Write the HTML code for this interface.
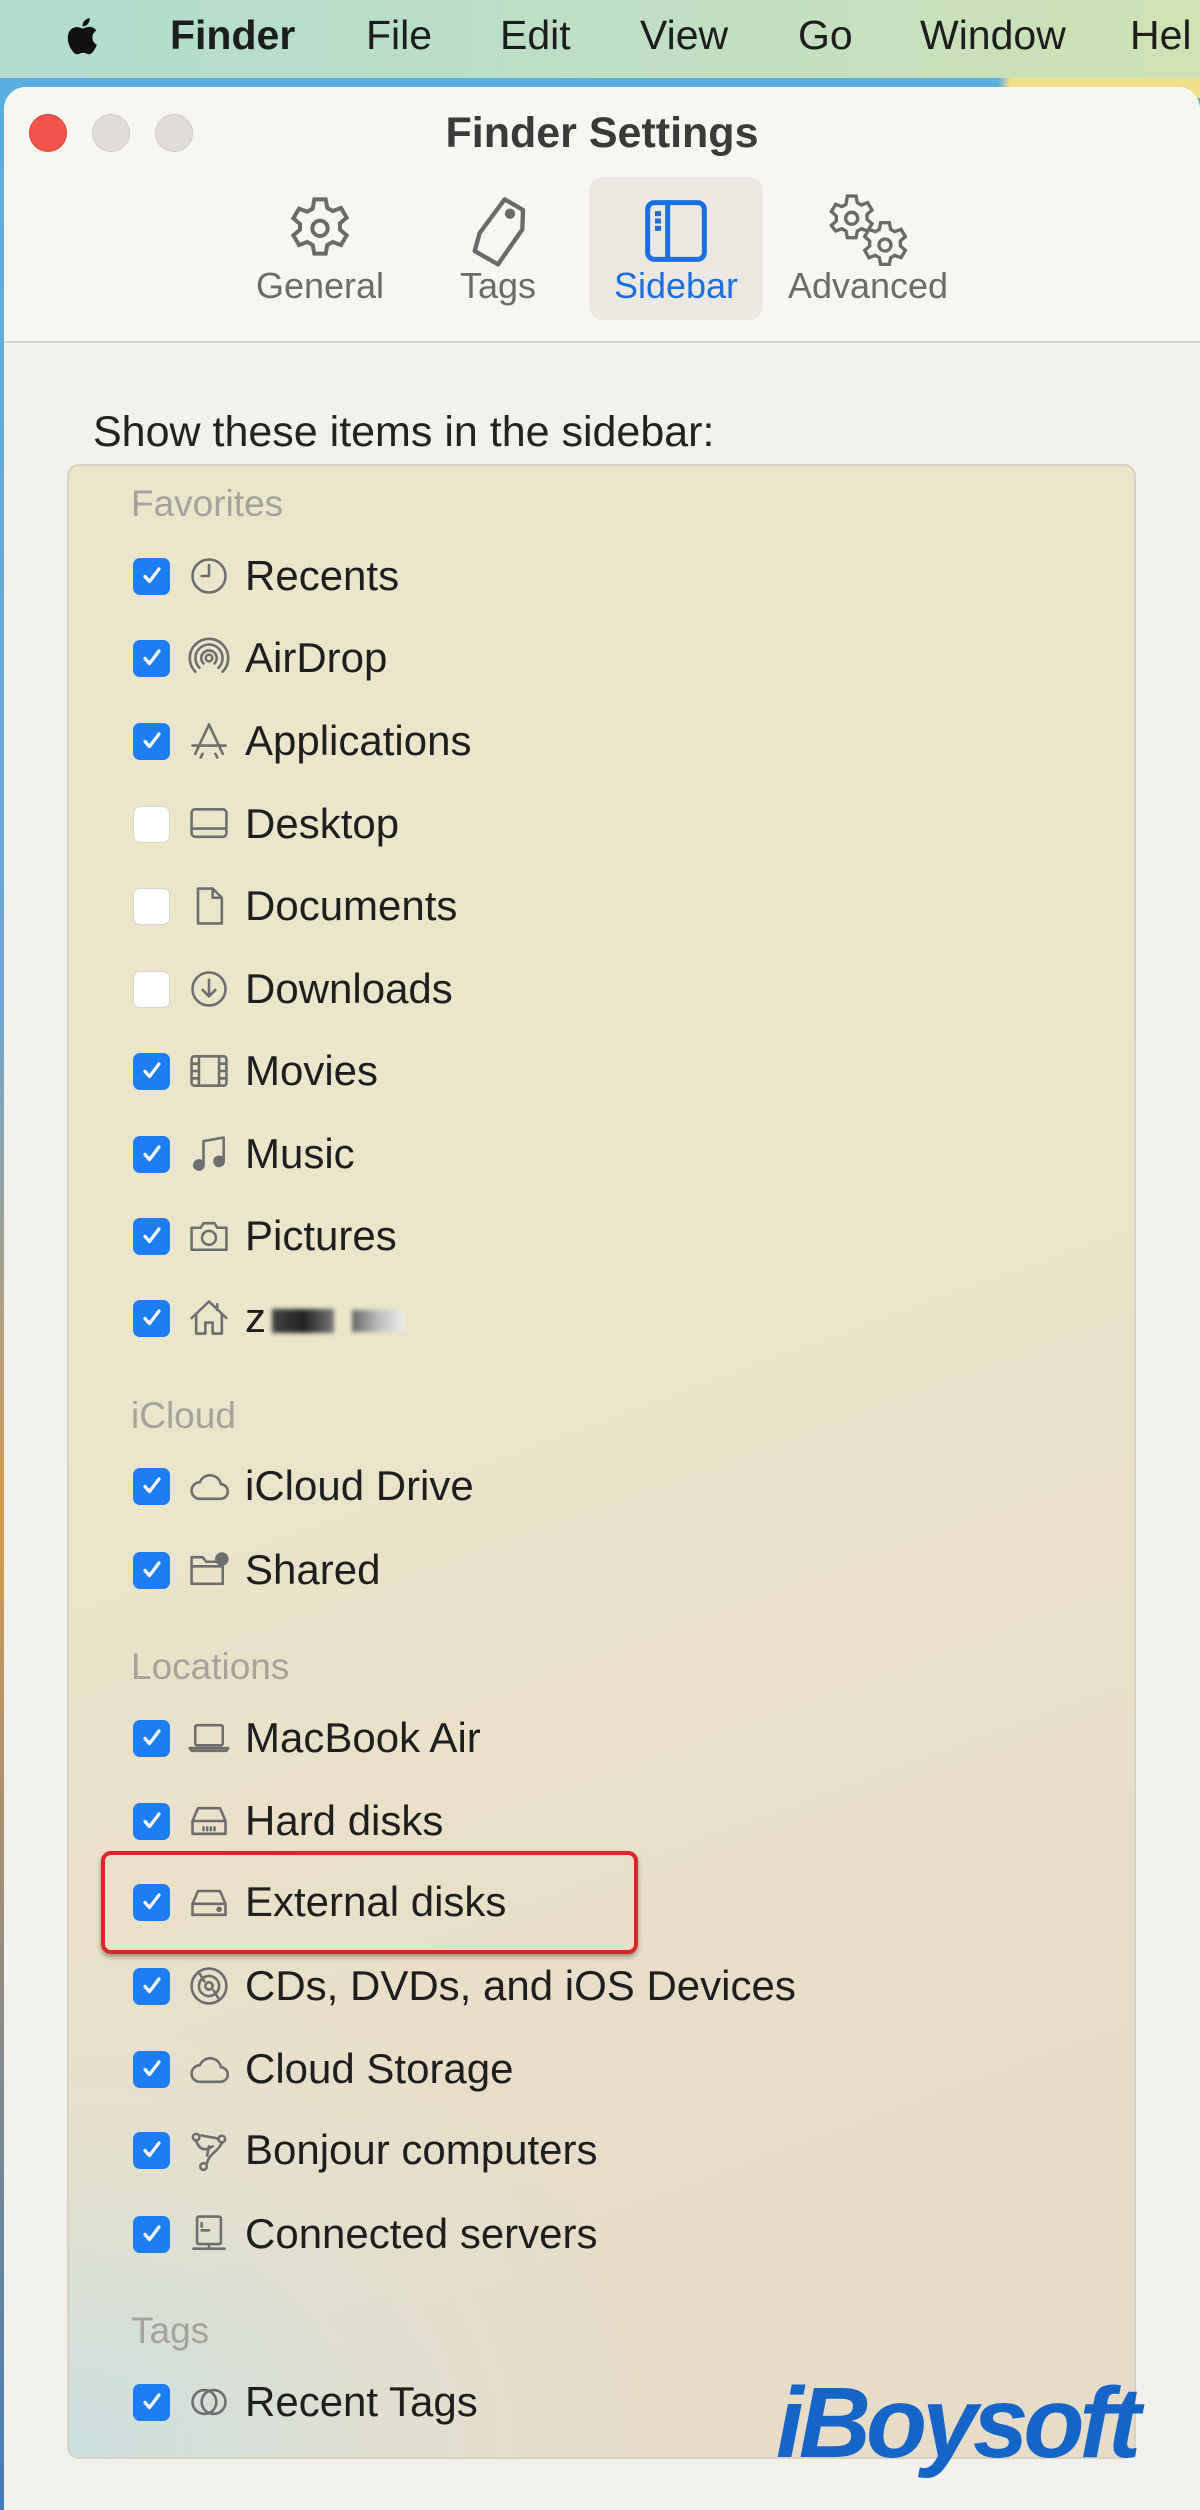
<!DOCTYPE html>
<html><head><meta charset="utf-8">
<style>
*{margin:0;padding:0;box-sizing:border-box}
html,body{width:1200px;height:2510px;overflow:hidden}
body{position:relative;font-family:"Liberation Sans",sans-serif;background:linear-gradient(180deg,#5aaee0 0,#6aa8d8 40%,#d99a4a 60%,#3f7ec0 100%)}
#menubar{position:absolute;left:0;top:0;width:1200px;height:78px;overflow:hidden;background:linear-gradient(90deg,#b0ddcf 0,#bfe0c4 55%,#cfe2b2 100%)}
#menubar span{position:absolute;top:12px;font-size:41px;color:#1d1d1d;white-space:nowrap}
#strip{position:absolute;left:0;top:78px;width:1200px;height:20px;background:linear-gradient(100deg,#5aaee0 0,#5aaee0 83%,#f1e08a 84%,#f1e08a 100%)}
#win{position:absolute;left:4px;top:87px;width:1196px;height:2423px;background:#f3f1ec;border-radius:22px 22px 0 0;overflow:hidden}
#head{position:absolute;left:0;top:0;width:100%;height:256px;background:#f8f6f1;border-bottom:2px solid #d8d5cf}
.tl{position:absolute;top:27px;width:38px;height:38px;border-radius:50%;background:#e0ddd8;border:1px solid #cfccc6}
#title{position:absolute;left:0;width:1196px;top:22px;text-align:center;font-size:43px;font-weight:bold;color:#3a3a3a}
.tb{position:absolute;top:90px;width:174px;height:143px;text-align:center}
.tb svg{position:absolute;left:50%;top:14px;transform:translateX(-50%)}
.tb .l{position:absolute;left:-20px;right:-20px;top:88px;font-size:36px;color:#6b6b6b}
#show{position:absolute;left:93px;top:408px;font-size:43px;color:#222}
#box{position:absolute;left:67px;top:464px;width:1069px;height:1995px;border:2px solid #d8d2c3;border-radius:12px;background:linear-gradient(160deg,#ebe6c9 0,#ebe6c9 35%,#e9dfc8 70%,#e6dcc8 85%),#e9e2c8;overflow:hidden}
#box:after{content:"";position:absolute;left:0;bottom:0;width:600px;height:500px;background:radial-gradient(ellipse at 0% 100%,rgba(200,225,228,.9) 0,rgba(220,226,215,.4) 40%,rgba(0,0,0,0) 70%)}
.hd{position:absolute;left:131px;font-size:37px;color:#a5a39a;z-index:2}
.row{position:absolute;left:133px;height:44px;display:flex;align-items:center;z-index:2}
.cb{width:37px;height:37px;border-radius:7px;background:#1d7df5;display:flex;align-items:center;justify-content:center;flex:none}
.cb.off{background:#fff;border:1px solid #d8d6d0}
.ic{width:44px;height:44px;margin-left:17px;display:flex;align-items:center;justify-content:center;flex:none}
.tx{margin-left:14px;font-size:42px;color:#1e1e1e;white-space:nowrap}
#hl{position:absolute;left:101px;top:1851px;width:537px;height:103px;border:4px solid #d9262a;border-radius:10px;box-shadow:0 3px 5px rgba(0,0,0,.35);z-index:3}
#logo{position:absolute;left:776px;top:2366px;font-size:100px;font-weight:bold;font-style:italic;color:#1565c8;letter-spacing:-5px;z-index:4;white-space:nowrap}
</style></head><body>
<div id="menubar">
<svg style="position:absolute;left:63px;top:14px" width="36" height="44" viewBox="0 0 24 29"><path d="M19.6 15.4c0-3 2.5-4.5 2.6-4.6-1.4-2.1-3.6-2.4-4.4-2.4-1.9-.2-3.7 1.1-4.6 1.1-1 0-2.4-1.1-4-1-2 0-3.9 1.2-5 3-2.1 3.7-.5 9.2 1.5 12.2 1 1.5 2.2 3.1 3.8 3 1.5-.1 2.1-1 3.9-1s2.3 1 3.9 1c1.6 0 2.7-1.5 3.6-3 1.2-1.7 1.6-3.3 1.700-3.4-.1 0-3-1.2-3-4.9zM16.6 6.4c.8-1 1.4-2.4 1.2-3.8-1.2.1-2.6.8-3.5 1.8-.8.9-1.4 2.3-1.2 3.7 1.3.1 2.7-.7 3.5-1.7z" fill="#111"/></svg>
<span style="left:170px;font-weight:bold">Finder</span>
<span style="left:366px">File</span>
<span style="left:500px">Edit</span>
<span style="left:640px">View</span>
<span style="left:798px">Go</span>
<span style="left:920px">Window</span>
<span style="left:1130px">Hel</span>
</div>
<div id="strip"></div>
<div id="win">
<div id="head">
<div class="tl" style="left:25px;background:#f3534b;border-color:#e0443c"></div>
<div class="tl" style="left:88px"></div>
<div class="tl" style="left:151px"></div>
<div id="title">Finder Settings</div>
<div class="tb" style="left:229px"><svg width="80" height="80" viewBox="0 0 24 24" fill="none" stroke="#6a6a6a" stroke-width="1.2"><path d="M10.3 2.5h3.4l.5 2.6 1.6.9 2.5-.9 1.7 2.9-2 1.7v1.9l2 1.7-1.7 2.9-2.5-.9-1.6.9-.5 2.6h-3.4l-.5-2.6-1.6-.9-2.5.9-1.7-2.9 2-1.7V9.9l-2-1.7 1.7-2.9 2.5.9 1.6-.9z"/><circle cx="12" cy="11.2" r="2.3"/></svg><div class="l">General</div></div>
<div class="tb" style="left:407px"><svg width="80" height="80" viewBox="0 0 24 24" fill="none" stroke="#6a6a6a" stroke-width="1.3" stroke-linejoin="round"><path d="M14 2.5l5.5 3.2-.2 5.8L12 22 5 18l1.5-5.4z"/><circle cx="15.6" cy="6.8" r=".9" fill="#6a6a6a"/></svg><div class="l">Tags</div></div>
<div class="tb" style="left:585px;background:#ebe8e2;border-radius:14px"><svg width="80" height="80" viewBox="0 0 24 24" fill="none" stroke="#1a6fe0" stroke-width="1.5"><rect x="3.5" y="3.5" width="17" height="17" rx="2"/><path d="M9.5 3.5v17M5.7 6.8h1.8M5.7 9h1.8M5.7 11.2h1.8"/></svg><div class="l" style="color:#1a6fe0">Sidebar</div></div>
<div class="tb" style="left:777px"><svg width="90" height="80" viewBox="0 0 26 24" fill="none" stroke="#6a6a6a" stroke-width="1"><path d="M6.8 1.5h2.6l.4 2 1.2.7 1.9-.7 1.3 2.2-1.5 1.3v1.5l1.5 1.3-1.3 2.2-1.9-.7-1.2.7-.4 2H6.8l-.4-2-1.2-.7-1.9.7L2 10.3l1.5-1.3V7.5L2 6.2l1.3-2.2 1.9.7 1.2-.7z"/><circle cx="8.1" cy="8.2" r="1.8"/><path d="M16.8 9.5h2.6l.4 2 1.2.7 1.9-.7 1.3 2.2-1.5 1.3v1.5l1.5 1.3-1.3 2.2-1.9-.7-1.2.7-.4 2h-2.6l-.4-2-1.2-.7-1.9.7-1.3-2.2 1.5-1.3V15l-1.5-1.3 1.3-2.2 1.9.7 1.2-.7z"/><circle cx="18.1" cy="16.2" r="1.8"/></svg><div class="l">Advanced</div></div>
</div>
</div>
<div id="show">Show these items in the sidebar:</div>
<div id="box"></div>

<div class="hd" style="top:483px">Favorites</div>
<div class="hd" style="top:1395px">iCloud</div>
<div class="hd" style="top:1646px">Locations</div>
<div class="hd" style="top:2310px">Tags</div>

<div id="hl"></div>
<div id="logo">iBoysoft</div>

<div id="rows"></div>
<script>
var ck='<svg width="24" height="24" viewBox="0 0 24 24"><path d="M5 12.5l4.5 5L19 5" fill="none" stroke="#fff" stroke-width="3.2" stroke-linecap="round" stroke-linejoin="round"/></svg>';
var S='fill="none" stroke="#6e6e6e" stroke-width="1.4" stroke-linecap="round" stroke-linejoin="round"';
var I={
rec:'<circle cx="12" cy="12" r="9"/><path d="M12 6v6H8"/>',
air:'<circle cx="12" cy="12" r="1.8"/><path d="M9 15a4.2 4.2 0 1 1 6 0M6.8 17.3a7.4 7.4 0 1 1 10.4 0M4.6 19.5a10.5 10.5 0 1 1 14.8 0"/>',
app:'<path d="M12 3l-7.5 16M12 3l7.5 16M3 14.5h18M8.5 19l-1 2M15.5 19l1 2"/>',
desk:'<rect x="2.5" y="4" width="19" height="15" rx="2"/><path d="M2.5 14.5h19"/>',
doc:'<path d="M6 2.5h8l5 5V21.5H6z"/><path d="M14 2.5v5h5"/>',
dl:'<circle cx="12" cy="12" r="9"/><path d="M12 7v9M8.5 12.5L12 16l3.5-3.5"/>',
mov:'<rect x="2.5" y="4" width="19" height="16" rx="1.5"/><path d="M6.5 4v16M17.5 4v16M2.5 8h4M2.5 12h4M2.5 16h4M17.5 8h4M17.5 12h4M17.5 16h4"/>',
mus:'<path d="M9 18V5l11-2v13"/><circle cx="6.5" cy="18" r="2.5" fill="#6e6e6e"/><circle cx="17.5" cy="16" r="2.5" fill="#6e6e6e"/>',
pic:'<path d="M2.5 7.5h5l1.5-2.5h6l1.5 2.5h5V19.5h-19z"/><circle cx="12" cy="13" r="3.8"/>',
home:'<path d="M2.5 12L12 3l9.5 9M5 10v10.5h5v-6h4v6h5V10M16.5 4.5v3"/>',
cloud:'<path d="M7 19h11a4 4 0 0 0 .5-8 6 6 0 0 0-11.5-1A4.5 4.5 0 0 0 7 19z"/>',
sh:'<path d="M2.5 5h6l2 2.5h9v12h-17z"/><path d="M2.5 10h17"/><circle cx="19" cy="6" r="3" fill="#6e6e6e"/>',
mac:'<rect x="4.5" y="5" width="15" height="11" rx="1"/><path d="M1.5 17.5h21l-1 1.5h-19z"/>',
hd:'<path d="M3 12l3-7h12l3 7M3 12v7h18v-7zM3 12h18M9 15.5v1.5M11 15.5v1.5M13 15.5v1.5M15 15.5v1.5"/>',
ext:'<path d="M3 13l3-7h12l3 7M3 13v6h18v-6zM3 13h18"/><circle cx="17.5" cy="16" r=".8" fill="#6e6e6e"/>',
cd:'<circle cx="12" cy="12" r="9.5"/><circle cx="12" cy="12" r="2"/><circle cx="12" cy="12" r="5.5"/><path d="M7 5.5l2.5 4M17 18.5l-2.5-4"/>',
bon:'<circle cx="5" cy="5" r="1.8"/><circle cx="19" cy="6" r="1.8"/><circle cx="9" cy="21" r="1.8"/><path d="M5 7c2 6 6 5 9 3M19 8c-2 5-7 6-8 11M8 4c3 1 7 1 9 2M12 10l-1 5"/>',
srv:'<rect x="5.5" y="2.5" width="13" height="15" rx="1"/><path d="M8 6v2M8 10h4M3.5 20h17M12 17.5v2.5"/>',
tags:'<circle cx="9.5" cy="12" r="6.5"/><circle cx="14.5" cy="12" r="6.5"/>'
};
var R=[[576,'rec','Recents',1],[658,'air','AirDrop',1],[741,'app','Applications',1],[824,'desk','Desktop',0],[906,'doc','Documents',0],[989,'dl','Downloads',0],[1071,'mov','Movies',1],[1154,'mus','Music',1],[1236,'pic','Pictures',1],[1318,'home','__name',1],
[1486,'cloud','iCloud Drive',1],[1570,'sh','Shared',1],
[1738,'mac','MacBook Air',1],[1821,'hd','Hard disks',1],[1902,'ext','External disks',1],[1986,'cd','CDs, DVDs, and iOS Devices',1],[2069,'cloud','Cloud Storage',1],[2150,'bon','Bonjour computers',1],[2234,'srv','Connected servers',1],[2402,'tags','Recent Tags',1]];
var h='';
R.forEach(function(r){
var t=r[2]=='__name'?'z<span style="display:inline-block;width:62px;height:24px;margin-left:6px;background:linear-gradient(90deg,#444,#222 50%,#777);vertical-align:middle;filter:blur(2px)"></span><span style="display:inline-block;width:52px;height:22px;margin-left:18px;background:linear-gradient(90deg,#666,#bbb,#eee);vertical-align:middle;filter:blur(2px)"></span>':r[2];
h+='<div class="row" style="top:'+(r[0]-22)+'px"><div class="cb'+(r[3]?'':' off')+'">'+(r[3]?ck:'')+'</div><div class="ic"><svg width="44" height="44" viewBox="0 0 24 24" '+S+'>'+I[r[1]]+'</svg></div><div class="tx">'+t+'</div></div>';
});
document.getElementById('rows').innerHTML=h;
</script>
</body></html>
